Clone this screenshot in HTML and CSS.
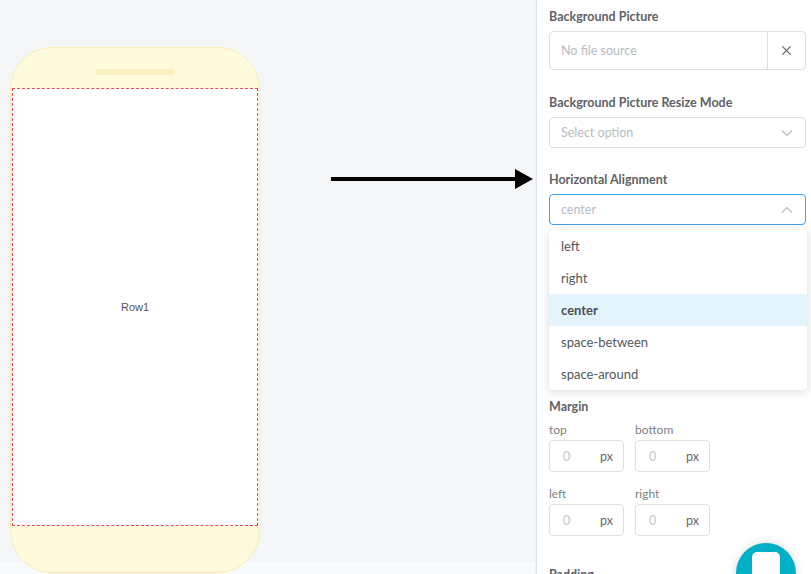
FILE: index.html
```html
<!DOCTYPE html>
<html>
<head>
<meta charset="utf-8">
<link rel="stylesheet" href="styles.css">
</head>
<body>
<div class="app">
  <div class="canvas">
    <div class="phone">
      <div class="notch"></div>
      <div class="screen"><span class="row-label">Row1</span></div>
    </div>
    <div class="arrow"><div class="arrow-line"></div><div class="arrow-head"></div></div>
  </div>
  <div class="panel">
    <div class="field first">
      <div class="label">Background Picture</div>
      <div class="file-input">
        <span class="placeholder">No file source</span>
        <span class="clear">
          <svg width="11" height="11" viewBox="0 0 12 12"><path d="M1.5 1.5 L10.5 10.5 M10.5 1.5 L1.5 10.5" stroke="#555" stroke-width="1.1" fill="none"/></svg>
        </span>
      </div>
    </div>
    <div class="field">
      <div class="label">Background Picture Resize Mode</div>
      <div class="select">
        <span class="placeholder">Select option</span>
        <svg class="chev" width="12" height="8" viewBox="0 0 12 8"><path d="M1 1.5 L6 6.5 L11 1.5" stroke="#b4b8bf" stroke-width="1.1" fill="none"/></svg>
      </div>
    </div>
    <div class="field dd-host">
      <div class="label">Horizontal Alignment</div>
      <div class="select focused">
        <span class="placeholder">center</span>
        <svg class="chev" width="12" height="8" viewBox="0 0 12 8"><path d="M1 6.5 L6 1.5 L11 6.5" stroke="#b4b8bf" stroke-width="1.1" fill="none"/></svg>
      </div>
      <ul class="dropdown">
        <li>left</li>
        <li>right</li>
        <li class="selected">center</li>
        <li>space-between</li>
        <li>space-around</li>
      </ul>
    </div>
    <div class="covered"></div>
    <div class="box-group">
      <div class="label small">Margin</div>
      <div class="box-grid">
        <div class="box-item"><div class="sub">top</div><div class="px-input"><span class="num">0</span><span class="unit">px</span></div></div>
        <div class="box-item"><div class="sub">bottom</div><div class="px-input"><span class="num">0</span><span class="unit">px</span></div></div>
        <div class="box-item"><div class="sub">left</div><div class="px-input"><span class="num">0</span><span class="unit">px</span></div></div>
        <div class="box-item"><div class="sub">right</div><div class="px-input"><span class="num">0</span><span class="unit">px</span></div></div>
      </div>
    </div>
    <div class="box-group">
      <div class="label small">Padding</div>
    </div>
    <div class="fab"><div class="fab-inner"></div></div>
  </div>
</div>
</body>
</html>
```

FILE: styles.css
```css
* { box-sizing: border-box; }
html, body { margin: 0; padding: 0; height: 100%; }
body {
  font-family: Lato, "Noto Sans", sans-serif;
  background: #f9fafb;
  overflow: hidden;
}
.app {
  display: flex;
  height: 574px;
  width: 811px;
}
.canvas {
  position: relative;
  width: 536px;
  height: 562px;
  background: #f5f6f8;
  padding: 47px 0 0 10px;
}
.phone {
  width: 250px;
  height: 526px;
  background: #fffadc;
  border: 1px solid #f8edb6;
  border-radius: 42px;
  padding: 40px 1px 0 1px;
  position: relative;
  display: flex;
  flex-direction: column;
}
.notch {
  position: absolute;
  left: 84px;
  top: 21px;
  width: 80px;
  height: 6px;
  border-radius: 3px;
  background: #fcf0c2;
}
.screen {
  height: 438px;
  background: #fff;
  border: 1px dashed #ec4a55;
  display: flex;
  align-items: center;
  justify-content: center;
}
.row-label {
  font-family: "Liberation Sans", Arial, sans-serif;
  font-size: 11px;
  color: #555;
}
.arrow {
  position: absolute;
  left: 331px;
  top: 169px;
  display: flex;
  align-items: center;
}
.arrow-line {
  width: 184px;
  height: 4px;
  background: #000;
}
.arrow-head {
  width: 0; height: 0;
  border-top: 10px solid transparent;
  border-bottom: 10px solid transparent;
  border-left: 18px solid #000;
}
.panel {
  position: relative;
  width: 275px;
  background: #fff;
  border-left: 1px solid #dde3ec;
  box-shadow: -1px 0 0 #eef1f6;
  padding: 7px 5px 0 12px;
  overflow: hidden;
}
.field { margin-bottom: 22px; }
.field.first { margin-bottom: 23px; }
.label {
  font-size: 12.5px;
  font-weight: 700;
  color: #5f6267;
  line-height: 20px;
  margin-bottom: 4px;
}
.label.small { font-size: 12.5px; margin-bottom: 0; line-height: 18px; }
.placeholder {
  font-size: 12.5px;
  color: #b8bbc1;
}
.file-input {
  height: 39px;
  border: 1px solid #dcdfe6;
  border-radius: 4px;
  display: flex;
  align-items: center;
}
.file-input .placeholder { flex: 1; padding-left: 11px; }
.clear {
  width: 38px;
  height: 100%;
  border-left: 1px solid #dcdfe6;
  display: flex;
  align-items: center;
  justify-content: center;
}
.select {
  height: 31px;
  border: 1px solid #dcdfe6;
  border-radius: 4px;
  display: flex;
  align-items: center;
  justify-content: space-between;
  padding: 0 12px 0 11px;
}
.select.focused { border-color: #3fa0ee; }
.dd-host { position: relative; margin-bottom: 0; }
.dropdown {
  position: absolute;
  left: 0;
  right: -1px;
  top: 60px;
  margin: 0;
  padding: 0;
  list-style: none;
  background: #fff;
  border-radius: 4px;
  box-shadow: 0 2px 10px rgba(0,0,0,0.14);
  z-index: 5;
}
.dropdown li {
  height: 32px;
  line-height: 32px;
  padding-left: 12px;
  font-size: 13px;
  color: #55585d;
}
.dropdown li.selected {
  background: #e3f4fd;
  font-weight: 700;
  color: #4c4f54;
}
.covered { height: 173px; }
.box-grid {
  display: grid;
  grid-template-columns: 75px 75px;
  column-gap: 11px;
  row-gap: 14px;
  margin-top: 6px;
  margin-bottom: 30px;
}
.sub {
  font-size: 12px;
  color: #7c7f85;
  line-height: 16px;
  margin-bottom: 2px;
}
.px-input {
  height: 32px;
  border: 1px solid #dcdfe6;
  border-radius: 4px;
  display: flex;
  align-items: center;
  justify-content: space-between;
  padding: 0 10px 0 13px;
  font-size: 12.5px;
}
.num { color: #c0c4cc; }
.unit { color: #666; }
.fab {
  position: absolute;
  left: 199px;
  top: 543px;
  width: 60px;
  height: 60px;
  border-radius: 50%;
  background: #00b0c6;
  box-shadow: 0 0 10px rgba(0,0,0,0.15);
  display: flex;
  justify-content: center;
  padding-top: 9px;
  z-index: 6;
}
.fab-inner {
  width: 28px;
  height: 28px;
  border-radius: 5px;
  background: #fff;
}
```
